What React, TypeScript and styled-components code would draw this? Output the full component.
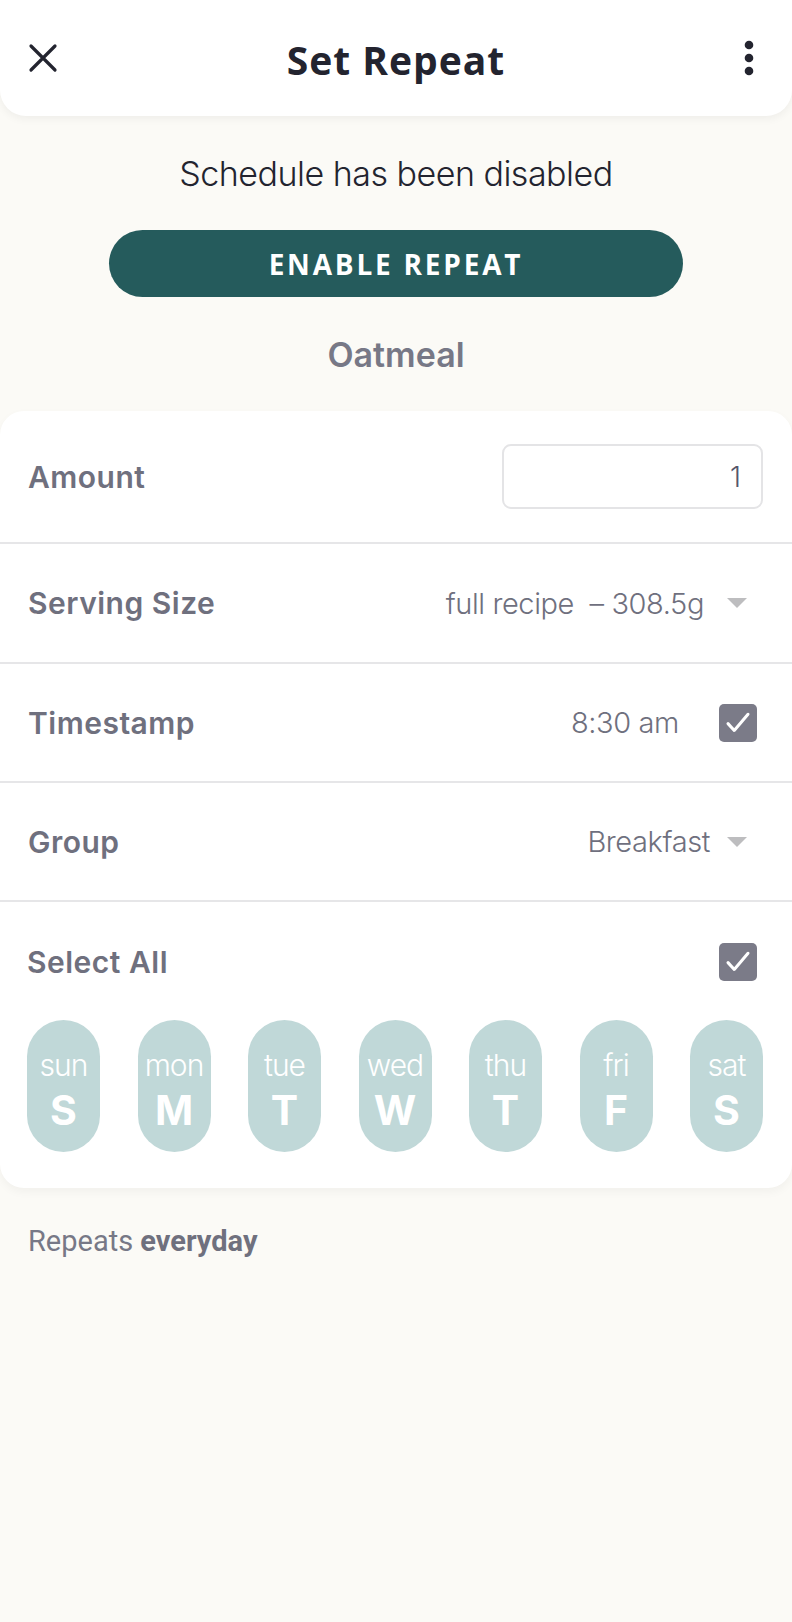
import React from "react";
import styled, { createGlobalStyle } from "styled-components";

const Global = createGlobalStyle`
  html, body { margin: 0; padding: 0; background: #fbfaf6; }
  body { font-family: "Inter", "Open Sans", sans-serif; -webkit-font-smoothing: antialiased; }
  #root { min-height: 1622px; }
`;

const Page = styled.div`
  width: 792px;
  min-height: 1622px;
  background: #fbfaf6;
  display: flex;
  flex-direction: column;
`;

const Header = styled.header`
  height: 116px;
  background: #ffffff;
  border-radius: 0 0 26px 26px;
  box-shadow: 0 3px 8px rgba(0, 0, 0, 0.05);
  display: grid;
  grid-template-columns: 86px 1fr 86px;
  align-items: center;
  position: relative;
  z-index: 1;
`;

const IconButton = styled.button`
  background: none;
  border: none;
  padding: 0;
  height: 60px;
  display: flex;
  align-items: center;
  justify-content: center;
  color: #23242f;
  cursor: pointer;
`;

const Title = styled.h1`
  margin: 0;
  text-align: center;
  font-family: "Open Sans", sans-serif;
  font-weight: 700;
  font-size: 39px;
  color: #23242f;
  letter-spacing: 1px;
  padding-top: 2px;
`;

const Top = styled.section`
  display: flex;
  flex-direction: column;
  align-items: center;
  padding-top: 38px;
`;

const Status = styled.p`
  margin: 0;
  font-family: "Inter", sans-serif;
  font-weight: 300;
  font-size: 34px;
  color: #23242f;
  letter-spacing: -0.5px;
  line-height: 40px;
`;

const EnableButton = styled.button`
  margin-top: 36px;
  width: 574px;
  height: 67px;
  border: none;
  border-radius: 34px;
  background: #255b5c;
  color: #ffffff;
  font-family: "Open Sans", sans-serif;
  font-weight: 700;
  font-size: 28px;
  letter-spacing: 2.8px;
  cursor: pointer;
`;

const FoodName = styled.h2`
  margin: 38px 0 0;
  font-family: "Inter", sans-serif;
  font-weight: 600;
  font-size: 34px;
  color: #777886;
  line-height: 40px;
`;

const Card = styled.section`
  margin-top: 36px;
  background: #ffffff;
  border-radius: 24px;
  box-shadow: 0 4px 10px rgba(0, 0, 0, 0.04);
  display: flex;
  flex-direction: column;
`;

const Row = styled.div<{ $h: number }>`
  height: ${(p) => p.$h}px;
  display: flex;
  align-items: center;
  justify-content: space-between;
  padding: 0 29px 0 28px;
  border-bottom: 2px solid #e6e6e8;
  box-sizing: border-box;
`;

const Label = styled.span`
  font-family: "Inter", sans-serif;
  font-weight: 600;
  font-size: 30px;
  color: #6f707e;
  letter-spacing: 0.5px;
`;

const Value = styled.span`
  font-family: "Inter", sans-serif;
  font-weight: 300;
  font-size: 29px;
  color: #6f707e;
  letter-spacing: -0.4px;
  white-space: pre;
`;

const Right = styled.div<{ $gap: number }>`
  display: flex;
  align-items: center;
  gap: ${(p) => p.$gap}px;
`;

const AmountInput = styled.div`
  width: 261px;
  height: 65px;
  border: 2px solid #e4e4e6;
  border-radius: 9px;
  box-sizing: border-box;
  display: flex;
  align-items: center;
  justify-content: flex-end;
  padding-right: 20px;
  font-family: "Inter", sans-serif;
  font-weight: 300;
  font-size: 28px;
  color: #55566a;
`;

const Caret = styled.span`
  width: 0;
  height: 0;
  border-left: 10px solid transparent;
  border-right: 10px solid transparent;
  border-top: 10px solid #bdbdbf;
  margin-right: 16px;
`;

const Check = styled.span`
  width: 38px;
  height: 38px;
  border-radius: 5px;
  background: #7b7b88;
  display: flex;
  align-items: center;
  justify-content: center;
  margin-right: 6px;
`;

const DaysBlock = styled.div`
  padding: 41px 29px 36px 27px;
  display: flex;
  flex-direction: column;
`;

const DaysHeader = styled.div`
  display: flex;
  align-items: center;
  justify-content: space-between;
  height: 38px;
`;

const Days = styled.div`
  margin-top: 39px;
  display: flex;
  justify-content: space-between;
`;

const Pill = styled.div`
  width: 73px;
  height: 132px;
  border-radius: 37px;
  background: #c0d8d8;
  display: flex;
  flex-direction: column;
  align-items: center;
  justify-content: center;
  color: #ffffff;
  padding-top: 10px;
  box-sizing: border-box;
`;

const DayShort = styled.span`
  font-family: "Inter", sans-serif;
  font-weight: 300;
  font-size: 30px;
  line-height: 34px;
  letter-spacing: -1px;
`;

const DayLetter = styled.span`
  font-family: "Inter", sans-serif;
  font-weight: 700;
  font-size: 41px;
  line-height: 48px;
  margin-top: 4px;
`;

const Summary = styled.p`
  margin: 36px 0 0 28px;
  font-family: "Roboto", sans-serif;
  font-size: 29px;
  color: #777886;
  & b { font-weight: 700; color: #6f707e; }
`;

const CheckIcon = () => (
  <svg width="30" height="30" viewBox="0 0 24 24" fill="none">
    <path d="M4 12.5l5 5.5L20 5" stroke="#fff" strokeWidth="2.4" strokeLinecap="round" strokeLinejoin="round" />
  </svg>
);

const days = [
  ["sun", "S"],
  ["mon", "M"],
  ["tue", "T"],
  ["wed", "W"],
  ["thu", "T"],
  ["fri", "F"],
  ["sat", "S"],
];

export default function App() {
  return (
    <Page>
      <Global />
      <Header>
        <IconButton aria-label="close">
          <svg width="30" height="30" viewBox="0 0 30 30">
            <path d="M3 3L27 27M27 3L3 27" stroke="#23242f" strokeWidth="3.2" strokeLinecap="round" />
          </svg>
        </IconButton>
        <Title>Set Repeat</Title>
        <IconButton aria-label="more">
          <svg width="12" height="36" viewBox="0 0 12 36">
            <circle cx="6" cy="5" r="4.3" fill="#23242f" />
            <circle cx="6" cy="18" r="4.3" fill="#23242f" />
            <circle cx="6" cy="31" r="4.3" fill="#23242f" />
          </svg>
        </IconButton>
      </Header>
      <Top>
        <Status>Schedule has been disabled</Status>
        <EnableButton>ENABLE REPEAT</EnableButton>
        <FoodName>Oatmeal</FoodName>
      </Top>
      <Card>
        <Row $h={133}>
          <Label>Amount</Label>
          <AmountInput>1</AmountInput>
        </Row>
        <Row $h={120}>
          <Label>Serving Size</Label>
          <Right $gap={23}>
            <Value>{"full recipe  – 308.5g"}</Value>
            <Caret />
          </Right>
        </Row>
        <Row $h={119}>
          <Label>Timestamp</Label>
          <Right $gap={40}>
            <Value>8:30 am</Value>
            <Check><CheckIcon /></Check>
          </Right>
        </Row>
        <Row $h={119}>
          <Label>Group</Label>
          <Right $gap={17}>
            <Value>Breakfast</Value>
            <Caret />
          </Right>
        </Row>
        <DaysBlock>
          <DaysHeader>
            <Label>Select All</Label>
            <Check><CheckIcon /></Check>
          </DaysHeader>
          <Days>
            {days.map(([s, l], i) => (
              <Pill key={i}>
                <DayShort>{s}</DayShort>
                <DayLetter>{l}</DayLetter>
              </Pill>
            ))}
          </Days>
        </DaysBlock>
      </Card>
      <Summary>
        Repeats <b>everyday</b>
      </Summary>
    </Page>
  );
}
